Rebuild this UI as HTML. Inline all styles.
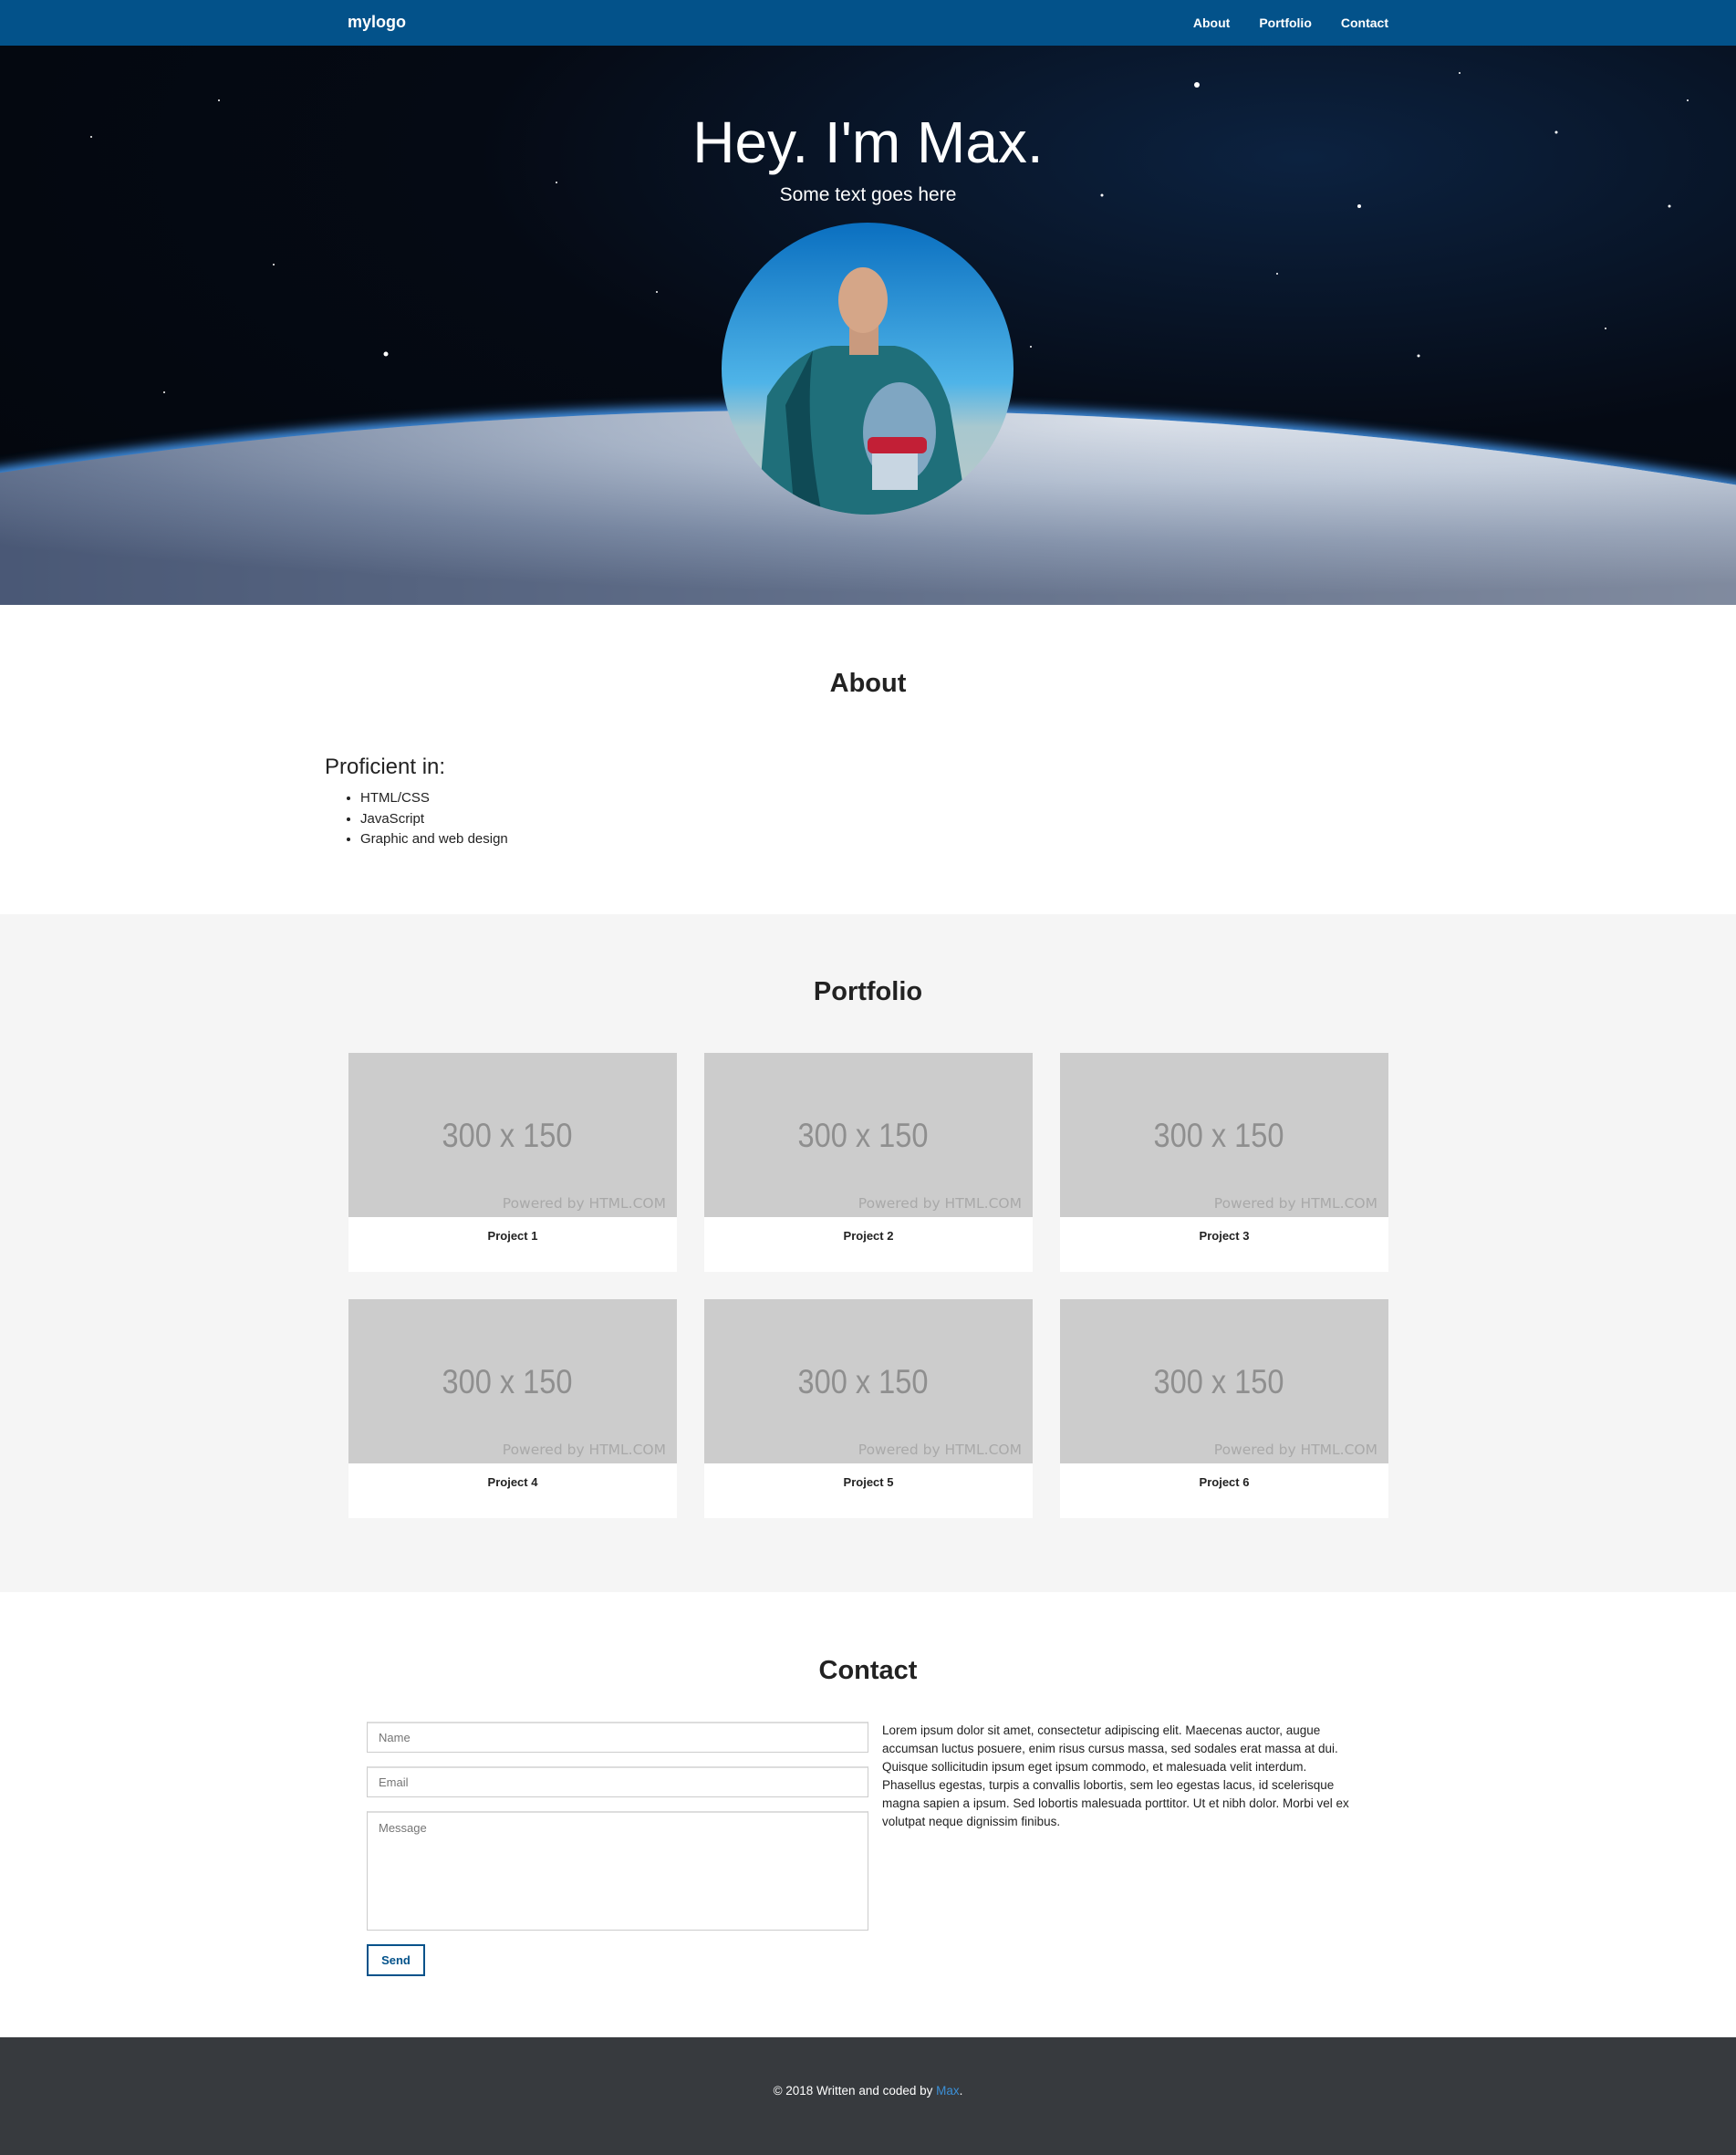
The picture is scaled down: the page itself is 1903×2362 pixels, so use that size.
<!DOCTYPE html>
<html><head><meta charset="utf-8"><style>
*{box-sizing:border-box;margin:0;padding:0}
body{width:1903px;height:2362px;font-family:"Liberation Sans",Arial,sans-serif;color:#222;background:#fff;overflow:hidden}
.nav{height:50px;background:#03528a;position:relative}
.nav .logo{position:absolute;left:381px;top:14px;color:#fff;font-weight:bold;font-size:18px}
.nav .links{position:absolute;right:381px;top:17px;color:#fff;font-weight:bold;font-size:14px}
.nav .links span{margin-left:32px}
.hero{position:relative;height:613px;overflow:hidden;background:radial-gradient(ellipse at 75% 20%,#0c2240 0%,#050a14 45%,#03060c 100%)}
.hero h1{position:absolute;top:66px;width:100%;text-align:center;color:#fff;font-weight:normal;font-size:64px;line-height:80px}
.hero p{position:absolute;top:152px;width:100%;text-align:center;color:#fff;font-size:21px}
.sec{position:relative}
h2{text-align:center;font-size:29px;font-weight:bold;color:#222}
.card{position:absolute;width:360px;height:240px;background:#fff}
.card .img{height:180px;background:#cccccc;position:relative}
.card .img .a{position:absolute;top:70px;left:-6px;width:100%;text-align:center;font-size:37px;color:#8f8f8f;transform:scaleX(0.88)}
.card .img .b{position:absolute;right:12px;bottom:6px;font-family:"DejaVu Sans",sans-serif;font-size:15.5px;color:#a9a9a9}
.card .t{text-align:center;font-weight:bold;font-size:13px;margin-top:13px}
input,textarea{position:absolute;border:1px solid #ccc;border-top:2px solid #ddd;left:402px;width:550px;font-family:inherit;font-size:13px;color:#999;padding:9px 12px;resize:none}
</style></head><body>
<div class="nav"><div class="logo">mylogo</div><div class="links"><span>About</span><span>Portfolio</span><span>Contact</span></div></div>
<div class="hero">
<svg width="1903" height="613" style="position:absolute;left:0;top:0">
<defs>
<radialGradient id="e" cx="0.65" cy="0.05" r="0.9"><stop offset="0" stop-color="#f2f5f9"/><stop offset="0.35" stop-color="#b7c3d4"/><stop offset="0.7" stop-color="#6a7a96"/><stop offset="1" stop-color="#3a4866"/></radialGradient>
<linearGradient id="r" x1="0" x2="1"><stop offset="0" stop-color="#5e6d8a"/><stop offset="0.5" stop-color="#9eabc0"/><stop offset="1" stop-color="#eef2f7"/></linearGradient>
<filter id="bl"><feGaussianBlur stdDeviation="6"/></filter>
</defs>
<g fill="#fff">
<circle cx="1312" cy="43" r="3"/><circle cx="423" cy="338" r="2.5"/><circle cx="1490" cy="176" r="2"/><circle cx="1208" cy="164" r="1.5"/><circle cx="1830" cy="176" r="1.5"/><circle cx="1706" cy="95" r="1.5"/><circle cx="1555" cy="340" r="1.5"/>
<circle cx="100" cy="100" r="1"/><circle cx="240" cy="60" r="1"/><circle cx="610" cy="150" r="1"/><circle cx="720" cy="270" r="1"/><circle cx="1400" cy="250" r="1"/><circle cx="1600" cy="30" r="1"/><circle cx="1760" cy="310" r="1"/><circle cx="300" cy="240" r="1"/><circle cx="180" cy="380" r="1"/><circle cx="1850" cy="60" r="1"/><circle cx="1130" cy="330" r="1"/>
</g>
<path d="M-50 470 Q951 310 1953 485 L1953 613 L-50 613Z" fill="#4aa2ff" filter="url(#bl)" opacity="0.9"/>
<path d="M-50 476 Q951 316 1953 490 L1953 613 L-50 613Z" fill="url(#r)"/>
<path d="M-50 476 Q951 316 1953 490 L1953 613 L-50 613Z" fill="url(#e)" opacity="0.6"/>
</svg>
<h1>Hey. I'm Max.</h1>
<p>Some text goes here</p>
<svg width="320" height="320" style="position:absolute;left:791px;top:194px">
<defs><clipPath id="c"><circle cx="160" cy="160" r="160"/></clipPath>
<linearGradient id="s" x1="0" y1="0" x2="0" y2="1"><stop offset="0" stop-color="#0a6fc0"/><stop offset="0.55" stop-color="#4fb4e8"/><stop offset="0.7" stop-color="#a8c8cf"/><stop offset="1" stop-color="#b9c9c8"/></linearGradient></defs>
<g clip-path="url(#c)">
<rect width="320" height="320" fill="url(#s)"/>
<path d="M40 320 L50 190 Q80 140 120 135 L190 135 Q230 140 250 200 L270 320Z" fill="#1f6f7a"/>
<path d="M100 140 Q90 220 110 320 L80 320 L70 200Z" fill="#0f4a55"/>
<rect x="140" y="105" width="32" height="40" fill="#c99a7e"/>
<ellipse cx="155" cy="85" rx="27" ry="36" fill="#d5a688"/>
<ellipse cx="195" cy="230" rx="40" ry="55" fill="#7fa6c2"/>
<rect x="160" y="235" width="65" height="18" rx="6" fill="#c21f36"/>
<rect x="165" y="253" width="50" height="40" fill="#c8d6e2"/>
</g></svg>
</div>
<div class="sec" style="height:339px">
<h2 style="position:absolute;top:70px;width:100%">About</h2>
<div style="position:absolute;left:356px;top:164px;font-size:24px">Proficient in:</div>
<ul style="position:absolute;left:395px;top:201px;font-size:15px;line-height:22.5px;color:#222">
<li>HTML/CSS</li><li>JavaScript</li><li>Graphic and web design</li></ul>
</div>
<div class="sec" style="height:743px;background:#f5f5f5">
<h2 style="position:absolute;top:69px;width:100%">Portfolio</h2>
<div class="card" style="left:382px;top:152px"><div class="img"><div class="a">300 x 150</div><div class="b">Powered by HTML.COM</div></div><div class="t">Project 1</div></div>
<div class="card" style="left:772px;top:152px"><div class="img"><div class="a">300 x 150</div><div class="b">Powered by HTML.COM</div></div><div class="t">Project 2</div></div>
<div class="card" style="left:1162px;top:152px"><div class="img"><div class="a">300 x 150</div><div class="b">Powered by HTML.COM</div></div><div class="t">Project 3</div></div>
<div class="card" style="left:382px;top:422px"><div class="img"><div class="a">300 x 150</div><div class="b">Powered by HTML.COM</div></div><div class="t">Project 4</div></div>
<div class="card" style="left:772px;top:422px"><div class="img"><div class="a">300 x 150</div><div class="b">Powered by HTML.COM</div></div><div class="t">Project 5</div></div>
<div class="card" style="left:1162px;top:422px"><div class="img"><div class="a">300 x 150</div><div class="b">Powered by HTML.COM</div></div><div class="t">Project 6</div></div>
</div>
<div class="sec" style="height:488px">
<h2 style="position:absolute;top:70px;width:100%">Contact</h2>
<input style="top:142px;height:34px" placeholder="Name" value="" />
<input style="top:191px;height:34px" placeholder="Email" value="" />
<textarea style="top:240px;height:131px" placeholder="Message"></textarea>
<div style="position:absolute;left:402px;top:386px;width:64px;height:35px;border:2px solid #03528a;color:#03528a;font-weight:bold;font-size:13px;text-align:center;line-height:31px">Send</div>
<div style="position:absolute;left:967px;top:142px;width:525px;font-size:13.5px;line-height:20px;color:#222">Lorem ipsum dolor sit amet, consectetur adipiscing elit. Maecenas auctor, augue accumsan luctus posuere, enim risus cursus massa, sed sodales erat massa at dui. Quisque sollicitudin ipsum eget ipsum commodo, et malesuada velit interdum. Phasellus egestas, turpis a convallis lobortis, sem leo egestas lacus, id scelerisque magna sapien a ipsum. Sed lobortis malesuada porttitor. Ut et nibh dolor. Morbi vel ex volutpat neque dignissim finibus.</div>
</div>
<div style="height:129px;background:#373a3e;color:#fff;font-size:13.5px;text-align:center;padding-top:51px">© 2018 Written and coded by <span style="color:#3b8fd6">Max</span>.</div>
</body></html>
